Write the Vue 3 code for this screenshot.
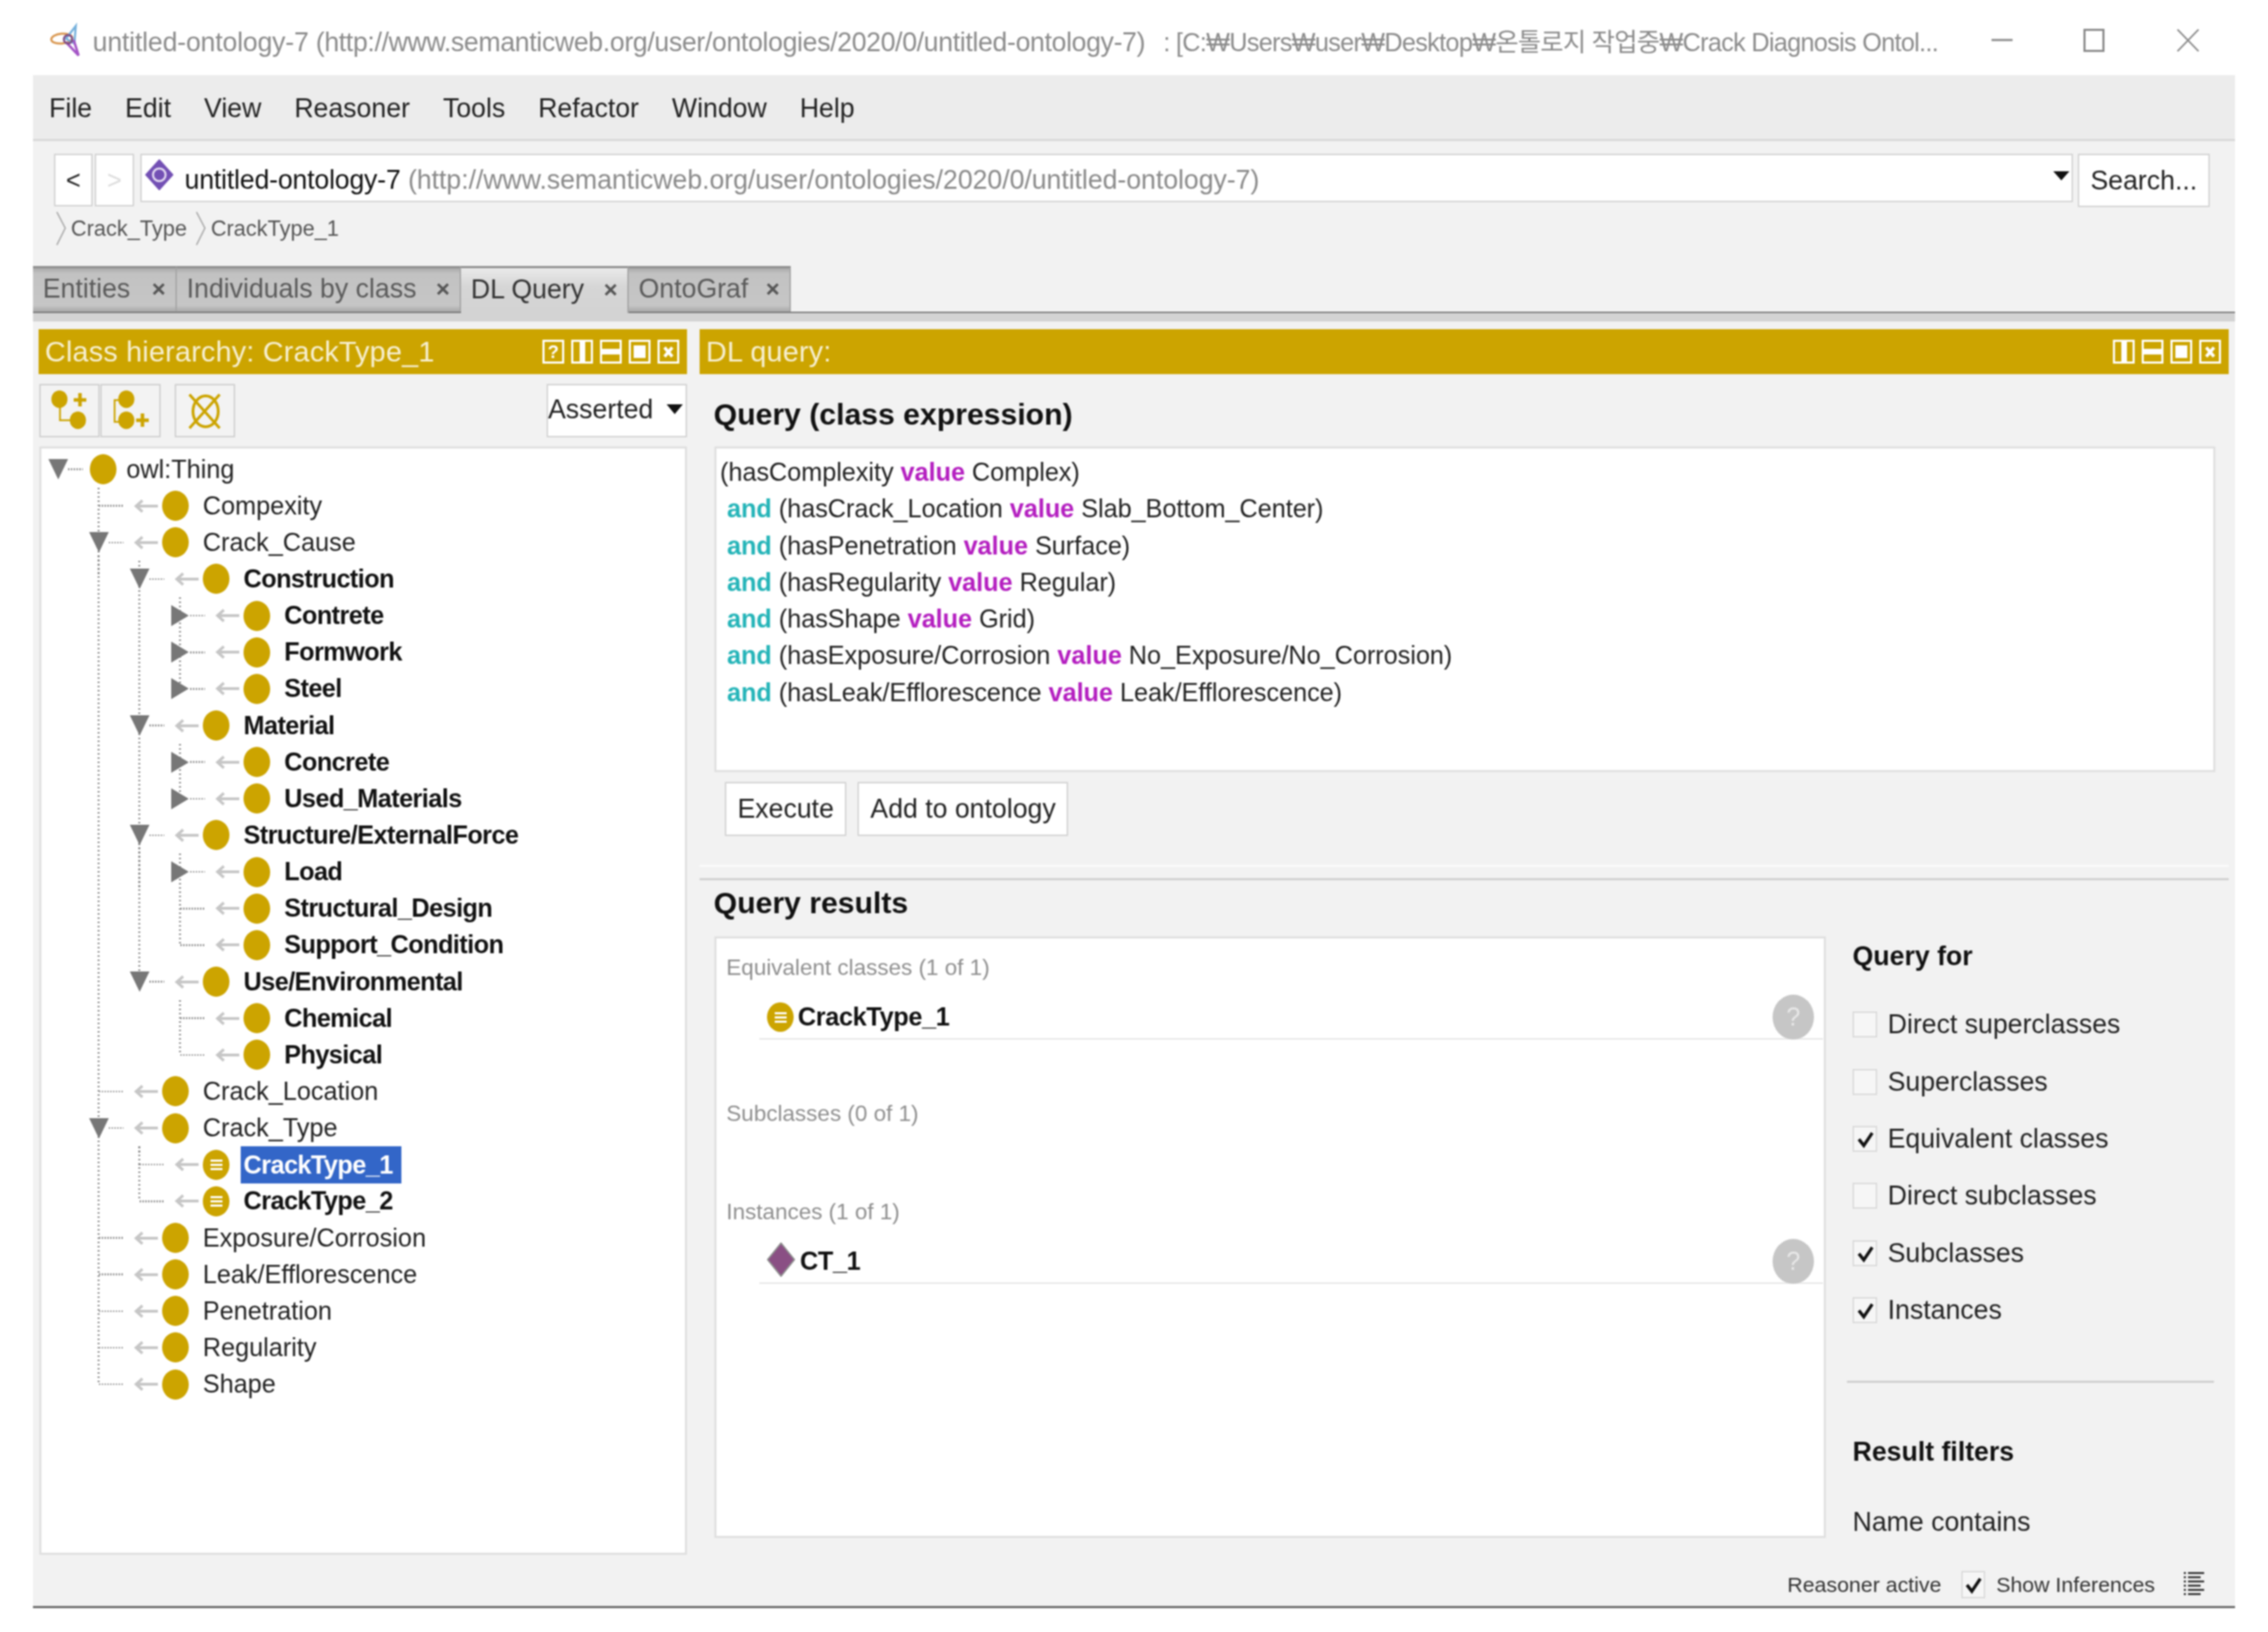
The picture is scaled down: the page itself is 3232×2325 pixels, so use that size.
<script setup>
const r = (t, l, k = '', b = false, extra = {}) => ({ t, l, k, b, ...extra })
const rows = [
  r('owl:Thing', 0, 'd'),
  r('Compexity', 1),
  r('Crack_Cause', 1, 'd'),
  r('Construction', 2, 'd', true),
  r('Contrete', 3, 'r', true),
  r('Formwork', 3, 'r', true),
  r('Steel', 3, 'r', true),
  r('Material', 2, 'd', true),
  r('Concrete', 3, 'r', true),
  r('Used_Materials', 3, 'r', true),
  r('Structure/ExternalForce', 2, 'd', true),
  r('Load', 3, 'r', true),
  r('Structural_Design', 3, '', true),
  r('Support_Condition', 3, '', true),
  r('Use/Environmental', 2, 'd', true),
  r('Chemical', 3, '', true),
  r('Physical', 3, '', true),
  r('Crack_Location', 1),
  r('Crack_Type', 1, 'd'),
  r('CrackType_1', 2, '', true, { eq: true, sel: true }),
  r('CrackType_2', 2, '', true, { eq: true }),
  r('Exposure/Corrosion', 1),
  r('Leak/Efflorescence', 1),
  r('Penetration', 1),
  r('Regularity', 1),
  r('Shape', 1)
]
const STEP = 52.15
const guides = []
rows.forEach((row, i) => {
  if (row.k !== 'd') return
  let last = i
  for (let j = i + 1; j < rows.length && rows[j].l > row.l; j++) {
    if (rows[j].l === row.l + 1) last = j
  }
  guides.push({
    left: 22 + 58 * (row.l + 1),
    top: 29.5 + STEP * i + 26,
    height: (last - i) * STEP - 26
  })
})
const menus = ['File', 'Edit', 'View', 'Reasoner', 'Tools', 'Refactor', 'Window', 'Help']
const tabs = [
  { t: 'Entities', w: 205 },
  { t: 'Individuals by class', w: 405 },
  { t: 'DL Query', w: 239, active: true },
  { t: 'OntoGraf', w: 231 }
]
const queryLines = [
  ['(hasComplexity ', 'Complex)', false],
  ['(hasCrack_Location ', 'Slab_Bottom_Center)', true],
  ['(hasPenetration ', 'Surface)', true],
  ['(hasRegularity ', 'Regular)', true],
  ['(hasShape ', 'Grid)', true],
  ['(hasExposure/Corrosion ', 'No_Exposure/No_Corrosion)', true],
  ['(hasLeak/Efflorescence ', 'Leak/Efflorescence)', true]
]
const checks = [
  ['Direct superclasses', false],
  ['Superclasses', false],
  ['Equivalent classes', true],
  ['Direct subclasses', false],
  ['Subclasses', true],
  ['Instances', true]
]
</script>

<template>
  <div class="app">
    <header class="titlebar">
      <svg class="logo" width="70" height="70" viewBox="0 0 70 70">
        <ellipse cx="28" cy="33" rx="15" ry="7" fill="none" stroke="#d9964e" stroke-width="3" transform="rotate(-5 28 33)" />
        <path d="M48 15 L34 33 L46 40 Z" fill="none" stroke="#74b0dc" stroke-width="3" />
        <path d="M34 38 L52 57 L45 35" fill="none" stroke="#a455c6" stroke-width="3.5" />
        <circle cx="37" cy="34" r="6" fill="none" stroke="#7d4d86" stroke-width="3" />
      </svg>
      <div class="title">
        <span class="name">untitled-ontology-7</span><span class="url"> (http://www.semanticweb.org/user/ontologies/2020/0/untitled-ontology-7)</span><span class="path">: [C:₩Users₩user₩Desktop₩온톨로지 작업중₩Crack Diagnosis Ontol...</span>
      </div>
      <svg class="win-min" width="30" height="4" viewBox="0 0 30 4"><path d="M0 2H30" stroke="#8a8a8a" stroke-width="3" /></svg>
      <svg class="win-max" width="30" height="33" viewBox="0 0 30 33"><rect x="1.5" y="1.5" width="27" height="30" fill="none" stroke="#8a8a8a" stroke-width="3" /></svg>
      <svg class="win-close" width="32" height="33" viewBox="0 0 32 33"><path d="M1 1L31 32M31 1L1 32" stroke="#8a8a8a" stroke-width="2.5" /></svg>
    </header>

    <div class="window">
      <nav class="menubar">
        <span v-for="m in menus" :key="m">{{ m }}</span>
      </nav>

      <section class="nav">
        <div class="nav-row">
          <div class="hist">&lt;</div>
          <div class="hist fwd">&gt;</div>
          <div class="combo">
            <svg class="onto" width="40" height="44" viewBox="0 0 40 44">
              <path d="M20 1 L39 22 L20 43 L1 22 Z" fill="#7350b4" stroke="#7350b4" stroke-linejoin="round" stroke-width="2" />
              <circle cx="20" cy="22" r="9" fill="#7350b4" stroke="#e4dcf2" stroke-width="3" />
            </svg>
            <span class="name">untitled-ontology-7</span><span class="url"> (http://www.semanticweb.org/user/ontologies/2020/0/untitled-ontology-7)</span>
            <svg class="combo-arrow" width="23" height="13" viewBox="0 0 23 13"><path d="M0 0H23L11.5 13Z" fill="#111" /></svg>
          </div>
          <div class="search">Search...</div>
        </div>
        <div class="crumbs">
          <svg width="16" height="49" viewBox="0 0 16 49"><path d="M2 1L14 24L2 48" fill="none" stroke="#aaa" stroke-width="2" /></svg>
          <span>Crack_Type</span>
          <svg width="16" height="49" viewBox="0 0 16 49"><path d="M2 1L14 24L2 48" fill="none" stroke="#aaa" stroke-width="2" /></svg>
          <span>CrackType_1</span>
        </div>
      </section>

      <div class="tabs">
        <div v-for="tab in tabs" :key="tab.t" class="tab" :class="{ active: tab.active }" :style="{ width: tab.w + 'px' }">
          <span>{{ tab.t }}</span><span class="tab-x">×</span>
        </div>
      </div>
      <div class="band"></div>

      <main class="panels">
        <section class="left">
          <div class="head">
            <span class="head-text">Class hierarchy: CrackType_1</span>
            <div class="head-icons">
              <span class="hb"><b>?</b></span>
              <span class="hb"><i class="cols"></i></span>
              <span class="hb"><i class="rws"></i></span>
              <span class="hb"><i class="max"></i></span>
              <span class="hb"><svg width="19" height="21" viewBox="0 0 19 21"><path d="M4 4L15 17M15 4L4 17" stroke="#fff" stroke-width="4.5" /></svg></span>
            </div>
          </div>
          <div class="toolbar">
            <div class="tbtn">
              <svg width="81" height="72" viewBox="2 2 81 72">
                <ellipse cx="27.7" cy="21.7" rx="11.5" ry="12.5" fill="#cca400" />
                <ellipse cx="54" cy="51.7" rx="11.5" ry="12.5" fill="#cca400" />
                <path d="M28.5 34V51.7H43" fill="none" stroke="#cca400" stroke-width="2.5" />
                <path d="M57 13V32M48 22.7H66" stroke="#cca400" stroke-width="5" />
              </svg>
            </div>
            <div class="tbtn">
              <svg width="81" height="72" viewBox="2 2 81 72">
                <ellipse cx="36" cy="21.7" rx="11.5" ry="12.5" fill="#cca400" />
                <ellipse cx="36" cy="51.7" rx="11.5" ry="12.5" fill="#cca400" />
                <path d="M27 23H19.3V54H27" fill="none" stroke="#cca400" stroke-width="2.5" />
                <path d="M59 42V61M50 51.7H68" stroke="#cca400" stroke-width="5" />
              </svg>
            </div>
            <div class="tbtn third">
              <svg width="82" height="72" viewBox="2 2 82 72">
                <ellipse cx="44" cy="39" rx="18" ry="22" fill="none" stroke="#cca400" stroke-width="4" />
                <path d="M21 15L64 63M64 15L21 63" stroke="#cca400" stroke-width="4" />
              </svg>
            </div>
            <div class="asserted">
              <span>Asserted</span>
              <svg width="23" height="14" viewBox="0 0 23 14"><path d="M0 0H23L11.5 14Z" fill="#111" /></svg>
            </div>
          </div>
          <div class="tree">
            <i v-for="(g, i) in guides" :key="i" class="guide" :style="{ left: g.left + 'px', top: g.top + 'px', height: g.height + 'px' }"></i>
            <div v-for="row in rows" :key="row.t" class="row" :class="['lv' + row.l, { root: row.l === 0 }]">
              <span class="twist" :class="{ leaf: !row.k }">
                <svg v-if="row.k === 'd'" width="28" height="29" viewBox="0 0 28 29"><path d="M0 0H28L14 29Z" fill="#777" /></svg>
                <svg v-if="row.k === 'r'" width="25" height="30" viewBox="0 0 25 30"><path d="M0 0L25 15L0 30Z" fill="#777" /></svg>
              </span>
              <span class="conn" :class="{ leaf: !row.k }"></span>
              <svg v-if="row.l > 0" class="arrow" width="35" height="22" viewBox="0 0 35 22"><path d="M35 11H4M13 3L4 11L13 19" fill="none" stroke="#c6c6c6" stroke-width="4" /></svg>
              <span class="dot">
                <template v-if="row.eq"><i></i><i></i><i></i></template>
              </span>
              <span class="label" :class="{ bold: row.b, sel: row.sel }">{{ row.t }}</span>
            </div>
          </div>
        </section>

        <section class="right">
          <div class="head">
            <span class="head-text">DL query:</span>
            <div class="head-icons">
              <span class="hb"><i class="cols"></i></span>
              <span class="hb"><i class="rws"></i></span>
              <span class="hb"><i class="max"></i></span>
              <span class="hb"><svg width="19" height="21" viewBox="0 0 19 21"><path d="M4 4L15 17M15 4L4 17" stroke="#fff" stroke-width="4.5" /></svg></span>
            </div>
          </div>
          <h2 class="qhead">Query (class expression)</h2>
          <div class="qbox">
            <div v-for="(q, i) in queryLines" :key="i" class="qline"><template v-if="q[2]">{{ ' ' }}<b class="kw-and">and</b>{{ ' ' }}</template>{{ q[0] }}<b class="kw-val">value</b>{{ ' ' + q[1] }}</div>
          </div>
          <div class="qbtns">
            <div class="btn">Execute</div>
            <div class="btn">Add to ontology</div>
          </div>
          <div class="split"></div>
          <h2 class="rhead">Query results</h2>
          <div class="results">
            <div class="rbox">
              <div class="rlabel first">Equivalent classes (1 of 1)</div>
              <div class="ritem">
                <span class="dot"><i></i><i></i><i></i></span>
                <span class="rname">CrackType_1</span>
                <span class="help">?</span>
              </div>
              <div class="rlabel sub">Subclasses (0 of 1)</div>
              <div class="rlabel inst">Instances (1 of 1)</div>
              <div class="ritem">
                <svg class="indiv" width="42" height="51" viewBox="0 0 42 51"><path d="M21 2L40 25.5L21 49L2 25.5Z" fill="#8a4f84" stroke="#8c8c8c" stroke-width="2" stroke-linejoin="round" /></svg>
                <span class="rname">CT_1</span>
                <span class="help">?</span>
              </div>
            </div>
            <aside class="side">
              <h3>Query for</h3>
              <div class="checks">
                <label v-for="c in checks" :key="c[0]" class="check">
                  <span class="cb">
                    <svg v-if="c[1]" width="31" height="33" viewBox="0 0 31 33"><path d="M7 17L14 26L26 8" fill="none" stroke="#111" stroke-width="4.5" /></svg>
                  </span>
                  <span>{{ c[0] }}</span>
                </label>
              </div>
              <div class="side-rule"></div>
              <h3 class="filters">Result filters</h3>
              <div class="name-contains">Name contains</div>
            </aside>
          </div>
        </section>
      </main>

      <footer class="status">
        <span>Reasoner active</span>
        <span class="cb small"><svg width="30" height="35" viewBox="0 0 30 35"><path d="M6 18L13 27L25 9" fill="none" stroke="#111" stroke-width="4.5" /></svg></span>
        <span class="show">Show Inferences</span>
        <svg class="listicon" width="29" height="37" viewBox="0 0 29 37">
          <path d="M6 2H29M6 8H24M6 14H29M6 20H24M6 26H29M6 32H24" stroke="#222" stroke-width="2.5" />
          <path d="M0 2H3M0 8H3M0 14H3M0 20H3M0 26H3M0 32H3" stroke="#222" stroke-width="2.5" />
        </svg>
      </footer>
    </div>
  </div>
</template>

<style scoped>
.app {
  width: 3232px;
  height: 2325px;
  overflow: hidden;
  background: #fff;
  color: #222;
  font-family: "Liberation Sans", "Noto Sans CJK KR", sans-serif;
  font-size: 36px;
  filter: blur(0.8px);
}
.titlebar {
  box-sizing: border-box;
  height: 107px;
  padding: 7px 98px 0 60px;
  display: flex;
  align-items: center;
}
.logo { flex: none; }
.title {
  flex: 1;
  margin-left: 2px;
  white-space: pre;
  color: #8c8c8c;
  min-width: 0;
  overflow: hidden;
}
.name { font-size: 38px; letter-spacing: -0.25px; }
.url { font-size: 38px; letter-spacing: -0.49px; color: #8c8c8c; }
.path { font-size: 36px; margin-left: 26px; letter-spacing: -1px; }
.win-min { flex: none; }
.win-max { flex: none; margin-left: 101px; }
.win-close { flex: none; margin-left: 103px; }

.window {
  box-sizing: border-box;
  width: 3138px;
  height: 2184px;
  margin-left: 47px;
  background: #f2f2f2;
  border-bottom: 3px solid #666;
}
.menubar {
  box-sizing: border-box;
  height: 94px;
  padding: 4px 0 0 23px;
  display: flex;
  align-items: center;
  gap: 47px;
  font-size: 38px;
  background: #ececec;
  border-bottom: 3px solid #d8d8d8;
}
.nav {
  box-sizing: border-box;
  height: 178px;
  padding: 18px 0 0 30px;
}
.nav-row {
  display: flex;
  align-items: flex-start;
}
.hist {
  box-sizing: border-box;
  width: 55px;
  height: 75px;
  background: #fff;
  border: 2.5px solid #d2d2d2;
  display: flex;
  align-items: center;
  justify-content: center;
  font-size: 36px;
  color: #222;
}
.hist.fwd {
  width: 56px;
  margin-left: 3px;
  color: #ddd;
}
.combo {
  box-sizing: border-box;
  width: 2754px;
  height: 69px;
  margin-left: 9px;
  padding: 5px 3px 0 5px;
  background: #fff;
  border: 2.5px solid #d2d2d2;
  display: flex;
  align-items: center;
  white-space: pre;
  color: #111;
}
.onto { flex: none; margin-right: 16px; margin-top: -14px; }
.combo .url { color: #8a8a8a; letter-spacing: -0.05px; }
.combo-arrow { margin-left: auto; margin-top: -12px; }
.search {
  box-sizing: border-box;
  width: 188px;
  height: 76px;
  margin-left: 7px;
  padding-left: 16px;
  background: #fff;
  border: 2.5px solid #d2d2d2;
  display: flex;
  align-items: center;
  font-size: 38px;
}
.crumbs {
  display: flex;
  align-items: center;
  height: 49px;
  margin-top: 6px;
  padding-left: 2px;
  font-size: 31px;
  color: #555;
}
.crumbs span { margin-left: 6px; margin-right: 12px; }

.tabs {
  box-sizing: border-box;
  height: 67px;
  display: flex;
  border-bottom: 2px solid #777;
}
.tab {
  box-sizing: border-box;
  height: 65px;
  padding: 0 14px 4px 14px;
  display: flex;
  align-items: center;
  justify-content: space-between;
  font-size: 38px;
  color: #5a5a5a;
  background: linear-gradient(#a8a8a8, #c2c2c2 12%, #c6c6c6 85%, #a8a8a8);
  border-top: 3px solid #8d8d8d;
  border-right: 2px solid #a4a4a4;
}
.tab.active {
  height: 67px;
  color: #333;
  background: linear-gradient(#eaeaea, #d6d6d6 40%, #d3d3d3);
}
.tab-x {
  font-size: 34px;
  font-weight: bold;
  color: #555;
}
.band {
  height: 12px;
  background: #d3d3d3;
}

.panels {
  box-sizing: border-box;
  height: 1772px;
  padding: 11px 9px 0 8px;
  display: flex;
  gap: 18px;
}
.left { flex: none; width: 924px; }
.right { flex: 1; min-width: 0; }
.head {
  box-sizing: border-box;
  height: 64px;
  padding: 0 11px 0 9px;
  background: #cca400;
  color: #f7f0d2;
  font-size: 41px;
  display: flex;
  align-items: center;
  justify-content: space-between;
}
.head-text { letter-spacing: 0.3px; }
.head-icons {
  display: flex;
  gap: 10px;
}
.hb {
  box-sizing: border-box;
  width: 31px;
  height: 34px;
  border: 3px solid #fff;
  display: flex;
  align-items: center;
  justify-content: center;
  color: #fff;
  font-size: 26px;
}
.hb b { line-height: 1; }
.hb i { display: block; background: #fff; }
.hb .cols { width: 8px; height: 100%; }
.hb .rws { width: 100%; height: 8px; }
.hb .max { width: 17px; height: 18px; }

.toolbar {
  height: 76px;
  margin-top: 14px;
  display: flex;
}
.tbtn {
  box-sizing: border-box;
  width: 86px;
  height: 76px;
  margin-left: 1px;
  border: 2.5px solid #cfcfcf;
  background: #f3f3f3;
  display: flex;
  align-items: center;
  justify-content: center;
}
.tbtn.third { margin-left: 20px; }
.asserted {
  box-sizing: border-box;
  width: 200px;
  height: 76px;
  margin-left: auto;
  padding: 0 4px 4px 0;
  background: #fff;
  border: 2.5px solid #d2d2d2;
  display: flex;
  align-items: center;
  justify-content: space-between;
  font-size: 38px;
}
.tree {
  box-sizing: border-box;
  position: relative;
  height: 1579px;
  margin: 13px 0 0 1px;
  padding-top: 3.5px;
  background: #fff;
  border: 3px solid #e0e0e0;
  overflow: hidden;
}
.guide {
  position: absolute;
  width: 2.5px;
  background: repeating-linear-gradient(to bottom, #8c8c8c 0 2.5px, transparent 2.5px 6px);
}
.row {
  position: relative;
  height: 52.15px;
  display: flex;
  align-items: center;
}
.lv0 { padding-left: 10px; }
.lv1 { padding-left: 68px; }
.lv2 { padding-left: 126px; }
.lv3 { padding-left: 184px; }
.twist {
  flex: none;
  width: 28px;
  height: 30px;
  display: flex;
  align-items: center;
  justify-content: center;
}
.lv3 .twist svg { margin-left: -2px; }
.twist.leaf { width: 14px; }
.conn {
  flex: none;
  width: 21px;
  height: 2.5px;
  background: repeating-linear-gradient(to right, #8c8c8c 0 2px, transparent 2px 4px);
}
.conn.leaf { width: 35px; }
.arrow { flex: none; margin-left: 14px; }
.dot {
  flex: none;
  box-sizing: border-box;
  width: 38px;
  height: 43px;
  border-radius: 50%;
  background: #cca400;
  margin-left: 6px;
  display: flex;
  flex-direction: column;
  align-items: center;
  justify-content: center;
  gap: 3px;
}
.root .dot { margin-left: 10px; }
.dot i {
  display: block;
  width: 17px;
  height: 3px;
  background: #fff;
}
.label {
  margin-left: 20px;
  line-height: 52px;
  white-space: nowrap;
  color: #222;
}
.root .label { margin-left: 14px; }
.bold {
  font-weight: bold;
  letter-spacing: -0.8px;
  color: #111;
}
.sel {
  margin-left: 16px;
  padding: 0 12px 0 4px;
  height: 53px;
  line-height: 53px;
  background: #3366c8;
  color: #fff;
}

.qhead, .rhead {
  margin: 0;
  font-size: 43px;
  font-weight: bold;
  color: #111;
  padding-left: 20px;
}
.qhead {
  box-sizing: border-box;
  height: 103px;
  padding-top: 12px;
  display: flex;
  align-items: center;
}
.qbox {
  box-sizing: border-box;
  height: 464px;
  width: 2139px;
  margin-left: 21px;
  padding: 8px 0 0 5px;
  background: #fff;
  border: 3px solid #e0e0e0;
}
.qline {
  height: 52.3px;
  line-height: 52.3px;
  white-space: pre;
  letter-spacing: -0.05px;
  color: #222;
}
.kw-and { color: #24b4b8; }
.kw-val { color: #b41ec0; }
.qbtns {
  display: flex;
  gap: 16px;
  margin: 14px 0 0 36px;
}
.btn {
  box-sizing: border-box;
  height: 77px;
  padding: 0 16px;
  background: #fff;
  border: 2.5px solid #d2d2d2;
  display: flex;
  align-items: center;
  font-size: 38px;
}
.split {
  box-sizing: border-box;
  height: 22px;
  margin-top: 41px;
  border-top: 3px solid #fbfbfb;
  border-bottom: 3px solid #cfcfcf;
}
.rhead {
  box-sizing: border-box;
  height: 80px;
  padding-bottom: 16px;
  display: flex;
  align-items: center;
}
.results {
  display: flex;
  padding-left: 21px;
}
.rbox {
  box-sizing: border-box;
  flex: none;
  width: 1584px;
  height: 857px;
  background: #fff;
  border: 3px solid #e0e0e0;
}
.rlabel {
  height: 50px;
  line-height: 50px;
  padding-left: 14px;
  font-size: 32px;
  color: #8f8f8f;
}
.rlabel.first { margin-top: 16px; }
.rlabel.sub { margin-top: 80px; }
.rlabel.inst { margin-top: 90px; }
.ritem {
  box-sizing: border-box;
  height: 62px;
  margin: 16px 1px 0 61px;
  padding-left: 11px;
  display: flex;
  align-items: center;
  border-bottom: 2px solid #e6e6e6;
}
.ritem .dot { margin-left: 0; height: 42px; }
.indiv { flex: none; margin-left: -1px; margin-top: -6px; }
.rname {
  margin-left: 6px;
  font-weight: bold;
  letter-spacing: -0.5px;
  color: #111;
}
.help {
  flex: none;
  width: 59px;
  height: 64px;
  margin-left: auto;
  margin-right: 13px;
  border-radius: 50%;
  background: #c6c6c6;
  color: #e8e8e8;
  font-size: 36px;
  display: flex;
  align-items: center;
  justify-content: center;
}
.side {
  flex: 1;
  margin-left: 38px;
  font-size: 38px;
  color: #222;
}
.side h3 {
  margin: 0;
  height: 56px;
  line-height: 56px;
  font-size: 38px;
  font-weight: bold;
  color: #111;
}
.checks { margin-top: 29px; }
.check {
  height: 81.4px;
  display: flex;
  align-items: center;
  gap: 15px;
}
.cb {
  box-sizing: border-box;
  flex: none;
  width: 35px;
  height: 37px;
  background: #f6f6f6;
  border: 2px solid #d9d9d9;
  display: flex;
  align-items: center;
  justify-content: center;
}
.side-rule {
  width: 523px;
  height: 3px;
  margin: 60px 0 0 -8px;
  background: #cfcfcf;
}
.side .filters { margin-top: 70px; }
.name-contains {
  height: 56px;
  line-height: 56px;
  margin-top: 44px;
}
.status {
  box-sizing: border-box;
  height: 55px;
  padding-right: 44px;
  display: flex;
  align-items: center;
  justify-content: flex-end;
  font-size: 30.4px;
  color: #333;
}
.cb.small {
  width: 34px;
  height: 39px;
  margin-left: 28px;
}
.show { margin-left: 16px; }
.listicon { margin-left: 41px; }
</style>
